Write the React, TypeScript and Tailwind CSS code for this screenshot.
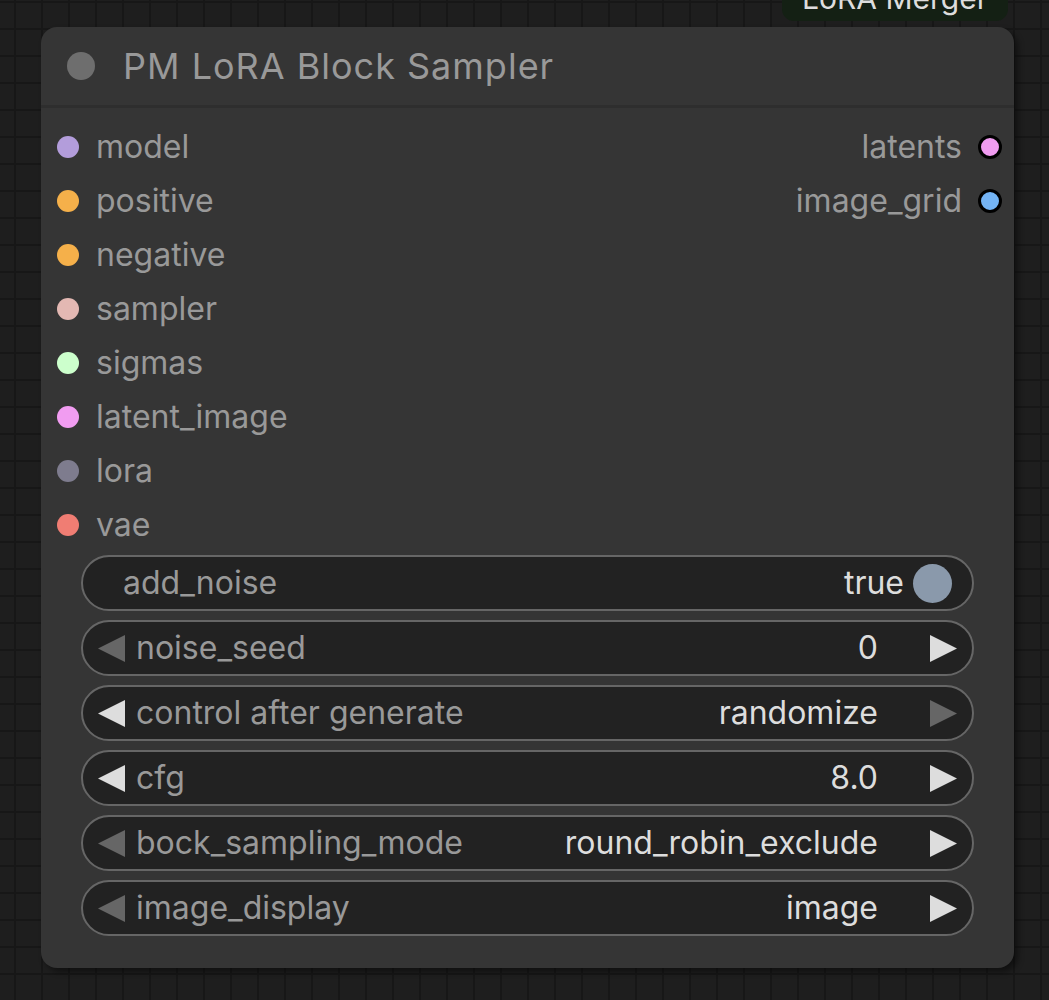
import React from "react";

type Slot = { name: string; color: string };

const inputs: Slot[] = [
  { name: "model", color: "#b39ddb" },
  { name: "positive", color: "#f5b04a" },
  { name: "negative", color: "#f5b04a" },
  { name: "sampler", color: "#e3b8b3" },
  { name: "sigmas", color: "#ccffcc" },
  { name: "latent_image", color: "#f19cf1" },
  { name: "lora", color: "#7e7c8e" },
  { name: "vae", color: "#f07d73" },
];

const outputs: Slot[] = [
  { name: "latents", color: "#f19cf1" },
  { name: "image_grid", color: "#74b4f5" },
];

type Combo = { label: string; value: string; left: boolean; right: boolean };

const combos: Combo[] = [
  { label: "noise_seed", value: "0", left: false, right: true },
  { label: "control after generate", value: "randomize", left: true, right: false },
  { label: "cfg", value: "8.0", left: true, right: true },
  { label: "bock_sampling_mode", value: "round_robin_exclude", left: false, right: true },
  { label: "image_display", value: "image", left: false, right: true },
];

function Arrow({ dir, active }: { dir: "left" | "right"; active: boolean }) {
  return (
    <svg width="27" height="27" viewBox="0 0 27 27" className="shrink-0">
      <polygon
        points={dir === "left" ? "27,0 27,27 0,13.5" : "0,0 0,27 27,13.5"}
        fill={active ? "#dddddd" : "#666666"}
      />
    </svg>
  );
}

function ComboWidget({ w }: { w: Combo }) {
  return (
    <div className="flex h-[56px] items-center rounded-full border-2 border-[#666] bg-[#222] pl-[15px] pr-[15px]">
      <Arrow dir="left" active={w.left} />
      <span className="ml-[11px] text-[#999]">{w.label}</span>
      <span className="ml-auto mr-[52px] text-[#ddd]">{w.value}</span>
      <Arrow dir="right" active={w.right} />
    </div>
  );
}

export default function App() {
  return (
    <div className="relative h-[1000px] w-[1049px] overflow-hidden bg-[#1e1e1e] bg-[linear-gradient(to_right,#171717_2px,transparent_2px),linear-gradient(to_bottom,#171717_2px,transparent_2px)] bg-[length:27px_27px] bg-[position:14px_1px] font-['Inter','Noto_Sans',sans-serif]">
      {/* node peeking in from above */}
      <div className="absolute left-[782px] top-[-40px] flex h-[61px] w-[226px] items-end justify-center rounded-b-[12px] bg-[#142014] pb-[8px] text-[30px] leading-none text-[#dddddd]">
        LoRA Merger
      </div>

      <div className="absolute left-[41px] top-[27px] w-[973px] rounded-[16px] bg-[#353535] shadow-[4px_4px_6px_rgba(0,0,0,0.45)]">
        <div className="flex h-[81px] items-center border-b-[3px] border-[#2e2e2e] pl-[26px]">
          <span className="h-[28px] w-[28px] rounded-full bg-[#6e6e6e]" />
          <span className="ml-[28px] text-[36px] tracking-[1px] text-[#999]">PM LoRA Block Sampler</span>
        </div>

        <div className="flex pt-[12px] text-[32px]">
          <div className="flex flex-1 flex-col">
            {inputs.map((s) => (
              <div key={s.name} className="flex h-[54px] items-center pl-[16px]">
                <span className="h-[22px] w-[22px] rounded-full" style={{ backgroundColor: s.color }} />
                <span className="ml-[17px] text-[#999]">{s.name}</span>
              </div>
            ))}
          </div>
          <div className="flex flex-col">
            {outputs.map((s) => (
              <div key={s.name} className="flex h-[54px] items-center justify-end pr-[12px]">
                <span className="mr-[16px] text-[#999]">{s.name}</span>
                <span
                  className="h-[24px] w-[24px] rounded-full border-[3px] border-black"
                  style={{ backgroundColor: s.color }}
                />
              </div>
            ))}
          </div>
        </div>

        <div className="flex flex-col gap-[9px] px-[40px] pb-[32px] pt-[3px] text-[32px]">
          <div className="flex h-[56px] items-center rounded-full border-2 border-[#666] bg-[#222] pl-[40px] pr-[20px]">
            <span className="text-[#999]">add_noise</span>
            <span className="ml-auto mr-[9px] text-[#ddd]">true</span>
            <span className="h-[39px] w-[39px] rounded-full bg-[#8a99ab]" />
          </div>
          {combos.map((w) => (
            <ComboWidget key={w.label} w={w} />
          ))}
        </div>
      </div>
    </div>
  );
}
